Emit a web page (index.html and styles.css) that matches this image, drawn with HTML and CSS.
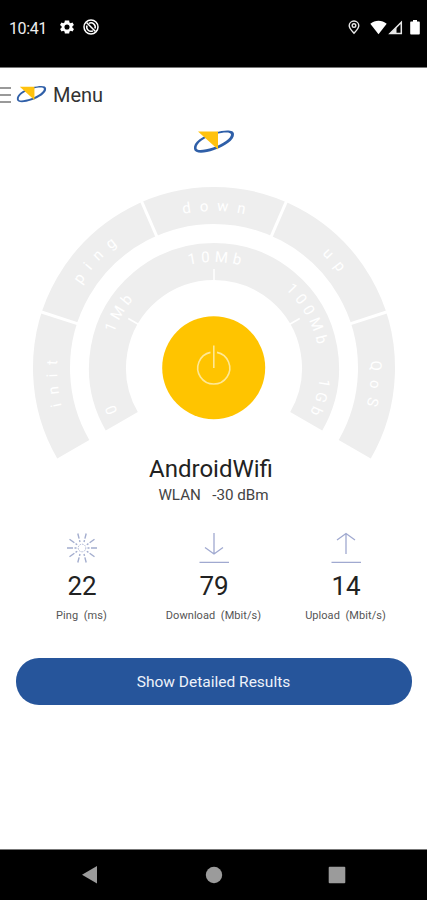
FILE: index.html
```html
<!DOCTYPE html>
<html lang="en">
<head>
<meta charset="utf-8">
<title>Menu</title>
<link rel="stylesheet" href="styles.css">
</head>
<body>
<svg class="defs" width="0" height="0" aria-hidden="true">
  <symbol id="logo" viewBox="0 0 42 26">
    <path fill="#2f5fa8" fill-rule="evenodd" d="M1 20C0 13 9 7 22 3.500C32 .7 41 .5 41 5C41.500 11 32 17 21 21C11 24.500 2 25 1 20ZM3.500 19C3.500 22.500 12 21 20 18.500C30 15 38.500 9 38 5.200C37 2.500 30 3.500 22 5C11 8.500 3.500 14 3.500 19Z"/>
    <path fill="#ffc20e" d="M5 2.500H25V20.500Z"/>
  </symbol>
</svg>
<div class="status">
  <span class="time">10:41</span>
  <svg class="gear" width="16" height="16" viewBox="1 1 22 22"><path fill="#fff" fill-rule="evenodd" d="M19.400 13c.1-.6.1-1.400 0-2l2.100-1.700-2-3.500-2.500 1a8 8 0 0 0-1.700-1L15 3H9l-.4 2.800a8 8 0 0 0-1.700 1l-2.500-1-2 3.500L4.600 11c-.1.600-.1 1.400 0 2l-2.100 1.700 2 3.500 2.500-1a8 8 0 0 0 1.700 1L9 21h6l.4-2.800a8 8 0 0 0 1.700-1l2.500 1 2-3.500ZM12 15.500a3.500 3.500 0 1 1 0-7 3.500 3.500 0 0 1 0 7Z"/></svg>
  <svg class="sync" width="16" height="16" viewBox="0 0 16 16" fill="none" stroke="#fff"><circle cx="8" cy="8" r="7" stroke-width="1.500"/><path stroke-width="1.500" d="M3.500 3.500L12.500 12.500M6 4.300A4.300 4.300 0 0 1 12 9.500M10 11.800A4.300 4.300 0 0 1 4 6.500"/></svg>
  <svg class="pin" width="12" height="16" viewBox="0 0 12 16" fill="none" stroke="#e8e8e8" stroke-width="1.400"><path d="M6 13.300C3.500 10.500 1.200 8.300 1.200 5.800a4.800 4.800 0 0 1 9.600 0C10.800 8.300 8.500 10.500 6 13.300Z"/><circle cx="6" cy="5.600" r="1.800"/></svg>
  <svg class="wifi" width="17" height="15" viewBox="0 0 17 15"><path fill="#fff" d="M.3 3.800C5-.3 12-.3 16.700 3.800L8.500 14.300Z"/></svg>
  <svg class="cell" width="15" height="15" viewBox="0 0 15 15"><path fill="none" stroke="#e8e8e8" stroke-width="1.500" d="M2 13.600H13.300V2.200Z"/><path fill="#e8e8e8" d="M2 14L8.500 7.500V14Z"/></svg>
  <svg class="battery" width="10" height="15" viewBox="0 0 10 15"><path fill="#fff" d="M3 0H7V1.500H9Q9.800 1.500 9.800 2.500V13.500Q9.800 14.500 9 14.500H1Q.2 14.500 .2 13.500V2.500Q.2 1.500 1 1.500H3Z"/></svg>
</div>
<header class="header">
  <span class="burger"><i></i><i></i><i></i></span>
  <svg class="header-logo"><use href="#logo"/></svg>
  <h1>Menu</h1>
</header>
<main>
  <svg class="brand"><use href="#logo"/></svg>
  <svg class="gauge" width="427" height="276" viewBox="0 184 427 276">
    <defs>
      <path id="outer-line" pathLength="240" d="M78.030 446.500A157 157 0 1 1 349.970 446.500"/>
      <path id="inner-line" pathLength="240" d="M122.200 421A106 106 0 1 1 305.800 421"/>
    </defs>
    <path class="band" d="M73.270 449.250A162.500 162.500 0 1 1 354.730 449.250"/>
    <path class="band" d="M121.770 421.250A106.500 106.500 0 1 1 306.230 421.250"/>
    <g class="split">
      <path d="M31 368H71" transform="rotate(18 214 368)"/>
      <path d="M31 368H71" transform="rotate(66.500 214 368)"/>
      <path d="M31 368H71" transform="rotate(113.500 214 368)"/>
      <path d="M31 368H71" transform="rotate(162 214 368)"/>
    </g>
    <g class="tick">
      <path d="M115 368H127" transform="rotate(30 214 368)"/>
      <path d="M115 368H127" transform="rotate(90 214 368)"/>
      <path d="M115 368H127" transform="rotate(150 214 368)"/>
    </g>
    <g class="phase">
      <text><textPath href="#outer-line" startOffset="26">init</textPath></text>
      <text><textPath href="#outer-line" startOffset="73.500">ping</textPath></text>
      <text><textPath href="#outer-line" startOffset="121.500">down</textPath></text>
      <text><textPath href="#outer-line" startOffset="169.500">up</textPath></text>
      <text><textPath href="#outer-line" startOffset="217">QoS</textPath></text>
    </g>
    <g class="scale">
      <text><textPath href="#inner-line" startOffset="9">0</textPath></text>
      <text><textPath href="#inner-line" startOffset="61">1Mb</textPath></text>
      <text><textPath href="#inner-line" startOffset="121.500">10Mb</textPath></text>
      <text><textPath href="#inner-line" startOffset="181">100Mb</textPath></text>
      <text><textPath href="#inner-line" startOffset="226.500">1Gb</textPath></text>
    </g>
    <circle cx="213.700" cy="367.700" r="51.500" fill="#ffc400"/>
    <path class="power" d="M210.500 352.400A16 16 0 1 0 217 352.400M213.800 345.500V368"/>
  </svg>
  <h2>AndroidWifi</h2>
  <p class="signal">WLAN&nbsp;&nbsp; -30 dBm</p>
  <section class="results">
    <div class="result">
      <svg width="32" height="32" viewBox="-16 -16 32 32" fill="none" stroke="#a3adce" stroke-width="1.400">
        <circle r="3.800" stroke-width=".9" stroke-dasharray="1.500 1"/>
        <path stroke-dasharray="2 1.500 6 1" d="M5.500 0H15.500M-5.500 0H-15.500M4.800 3.200L12.500 8.800M4.800 -3.200L12.500 -8.800M-4.800 3.200L-12.500 8.800M-4.800 -3.200L-12.500 -8.800M2 6L4.200 14.500M2 -6L4.200 -14.500M-2 6L-4.200 14.500M-2 -6L-4.200 -14.500"/>
      </svg>
      <strong>22</strong><span>Ping&nbsp; (ms)</span>
    </div>
    <div class="result">
      <svg width="32" height="32" viewBox="0 0 32 32" fill="none" stroke="#a0a9d0" stroke-width="1.300"><path d="M16 1V22M7 15.500L16 22L25 15.500M1.500 30.300H31"/></svg>
      <strong>79</strong><span>Download&nbsp; (Mbit/s)</span>
    </div>
    <div class="result">
      <svg width="32" height="32" viewBox="0 0 32 32" fill="none" stroke="#a0a9d0" stroke-width="1.300"><path d="M16 22V1.500M7 8L16 1.500L25 8M1.500 30.300H31"/></svg>
      <strong>14</strong><span>Upload&nbsp; (Mbit/s)</span>
    </div>
  </section>
  <button class="details">Show Detailed Results</button>
</main>
<nav class="nav">
  <svg width="18" height="20" viewBox="0 0 18 20"><path fill="#9b9b9b" d="M1 9.700L16 1V18.500Z"/></svg>
  <svg width="18" height="18" viewBox="0 0 18 18"><circle cx="9" cy="9" r="8.200" fill="#9b9b9b"/></svg>
  <svg width="18" height="18" viewBox="0 0 18 18"><rect x=".7" y=".7" width="16.600" height="16.600" rx="1" fill="#9b9b9b"/></svg>
</nav>
</body>
</html>
```
FILE: styles.css
```css
* { box-sizing: border-box; }
body {
  margin: 0;
  width: 427px;
  height: 900px;
  display: flex;
  flex-direction: column;
  background: #fff;
  color: #222;
  font-family: Roboto, sans-serif;
  overflow: hidden;
}
svg { display: block; flex: none; }
.defs { position: absolute; }
.status {
  height: 68px;
  padding: 19px 7px 0 9px;
  display: flex;
  align-items: flex-start;
  background: #000;
  border-bottom: 1px solid #777;
  color: #eee;
}
.time { width: 50px; font-size: 16px; line-height: 19px; letter-spacing: -.4px; }
.sync { margin-left: 8px; }
.pin { margin-left: auto; margin-top: 1px; }
.wifi { margin-left: 10px; margin-top: 1px; }
.cell { margin-left: 1px; margin-top: 1px; }
.battery { margin-left: 7px; margin-top: 1px; }
.header { height: 54px; display: flex; align-items: center; }
.burger { width: 11px; display: grid; gap: 5px; }
.burger i { height: 2px; background: #999; }
.header-logo { width: 31px; height: 19px; margin: -2px 0 0 5px; }
h1 { margin: 0 0 0 6px; font-size: 20px; font-weight: 400; line-height: 24px; color: #333; }
main { height: 727px; display: flex; flex-direction: column; align-items: center; }
.brand { width: 42px; height: 26px; margin: 7px 0 29px; }
.band { fill: none; stroke: #eee; stroke-width: 37; }
.split { stroke: #fff; stroke-width: 3; }
.tick { stroke: #fff; stroke-width: 1.5; }
.phase, .scale { fill: #fff; font-size: 15px; font-weight: 400; text-anchor: middle; }
.phase { letter-spacing: 8.5px; }
.scale { letter-spacing: 4.5px; }
.power { fill: none; stroke: #ffe894; stroke-width: 1.6; }
h2 { margin: -5px 5px 0 0; font-size: 24px; font-weight: 400; line-height: 28px; }
.signal { margin: 3px 0 0; font-size: 15.2px; line-height: 18px; color: #444; }
.results { width: 396px; display: grid; grid-template-columns: repeat(3, 1fr); margin-top: 28px; }
.result { display: flex; flex-direction: column; align-items: center; }
.result strong { margin: 7px 0 0 1px; font-size: 26px; font-weight: 400; line-height: 30px; }
.result span { margin-top: 8px; font-size: 11px; line-height: 13px; letter-spacing: .06px; color: #555; white-space: nowrap; }
.details {
  width: 396px;
  height: 47px;
  margin-top: 36px;
  padding: 2px 0 0;
  border: 0;
  border-radius: 23px;
  background: #26559b;
  color: #edf2fa;
  font: 400 15.500px/45px Roboto, sans-serif;
}
.nav {
  height: 51px;
  padding: 0 81px;
  display: flex;
  align-items: center;
  justify-content: space-between;
  background: #000;
  border-top: 1px solid #777;
}
```
